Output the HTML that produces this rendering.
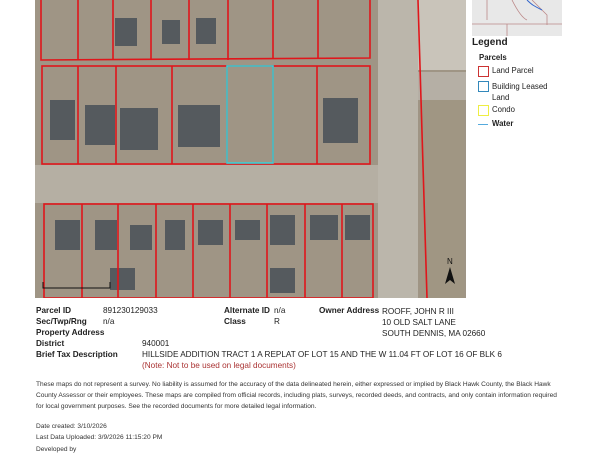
<!DOCTYPE html>
<html><head><style>
body{margin:0;width:600px;height:450px;background:#fff;font-family:"Liberation Sans",sans-serif;position:relative;overflow:hidden;color:#222}
.a{position:absolute;white-space:nowrap}
.b{font-weight:bold}
.t{font-size:8.2px}
.d{font-size:6.6px;line-height:11px;color:#333}
</style></head><body>
<svg class="a" style="left:35px;top:0" width="431" height="298" viewBox="35 0 431 298">
<rect x="35" y="0" width="431" height="298" fill="#9f9585"/>
<rect x="35" y="165" width="345" height="38" fill="#b5afa3"/>
<rect x="378" y="0" width="40" height="298" fill="#bbb6ab"/>
<rect x="418" y="0" width="48" height="70" fill="#c9c4ba"/>
<rect x="418" y="72" width="48" height="28" fill="#b5afa5"/>
<rect x="420" y="100" width="44" height="198" fill="#a09683"/>
<g fill="#555a5e">
<rect x="115" y="18" width="22" height="28"/><rect x="162" y="20" width="18" height="24"/><rect x="196" y="18" width="20" height="26"/>
<rect x="50" y="100" width="25" height="40"/><rect x="85" y="105" width="30" height="40"/><rect x="120" y="108" width="38" height="42"/><rect x="178" y="105" width="42" height="42"/>
<rect x="323" y="98" width="35" height="45"/>
<rect x="55" y="220" width="25" height="30"/><rect x="95" y="220" width="22" height="30"/><rect x="130" y="225" width="22" height="25"/><rect x="165" y="220" width="20" height="30"/><rect x="198" y="220" width="25" height="25"/><rect x="235" y="220" width="25" height="20"/><rect x="270" y="215" width="25" height="30"/><rect x="310" y="215" width="28" height="25"/><rect x="345" y="215" width="25" height="25"/><rect x="110" y="268" width="25" height="22"/><rect x="270" y="268" width="25" height="25"/>
</g>
<g fill="none" stroke="#e0161b" stroke-width="1.6">
<polyline points="41,0 41,60 370,58 370,0"/>
<path d="M78 0V60M113 0V60M151 0V60M189 0V60M228 0V60M273 0V58M318 0V58"/>
<rect x="42" y="66" width="328" height="98"/>
<path d="M78 66V164M116 66V164M172 66V164M227 66V164M273 66V164M317 66V164"/>
<rect x="44" y="204" width="329" height="94"/>
<path d="M82 204V298M118 204V298M156 204V298M193 204V298M230 204V298M267 204V298M305 204V298M342 204V298"/>
<path d="M418 0L427 298"/>
</g>
<rect x="227" y="66" width="46" height="97" fill="none" stroke="#3cd0d6" stroke-width="1.6"/>
<path d="M43 282V288H110V282" stroke="#111" fill="none"/>
<text x="447" y="264" font-size="8" fill="#111">N</text>
<path d="M450 267L445 284L450 280L455 284Z" fill="#111"/>
</svg>
<div class="a" style="left:472px;top:0;width:90px;height:36px;background:#e8e8e8"></div>
<svg class="a" style="left:472px;top:0" width="90" height="36"><path d="M15 0V20M40 0C45 10 50 18 55 20M60 0L75 15V25M0 24H90M35 24V36" stroke="#b88" fill="none" stroke-width=".8"/><path d="M55 0C60 5 62 6 70 10" stroke="#36c" fill="none"/></svg>
<div class="a b" style="left:472px;top:37px;font-size:10px">Legend</div>
<div class="a" style="left:479px;top:53px;font-size:7.8px;font-weight:bold">Parcels</div>
<div class="a" style="left:478px;top:66px;width:9px;height:9px;border:1.3px solid #c33"></div>
<div class="a" style="left:492px;top:66px;font-size:7.8px">Land Parcel</div>
<div class="a" style="left:478px;top:81px;width:9px;height:9px;border:1.3px solid #38b"></div>
<div class="a" style="left:492px;top:81px;font-size:7.8px;line-height:11px">Building Leased<br>Land</div>
<div class="a" style="left:478px;top:105px;width:9px;height:9px;border:1.3px solid #ee4"></div>
<div class="a" style="left:492px;top:105px;font-size:7.8px">Condo</div>
<div class="a" style="left:478px;top:124px;width:10px;height:1px;background:#5ad"></div>
<div class="a" style="left:492px;top:119px;font-size:7.8px;font-weight:bold">Water</div>

<div class="a t b" style="left:36px;top:306px">Parcel ID</div><div class="a t" style="left:103px;top:306px">891230129033</div>
<div class="a t b" style="left:36px;top:317px">Sec/Twp/Rng</div><div class="a t" style="left:103px;top:317px">n/a</div>
<div class="a t b" style="left:36px;top:328px">Property Address</div>
<div class="a t b" style="left:36px;top:339px">District</div><div class="a t" style="left:142px;top:339px">940001</div>
<div class="a t b" style="left:36px;top:350px">Brief Tax Description</div><div class="a t" style="left:142px;top:350px">HILLSIDE ADDITION TRACT 1 A REPLAT OF LOT 15 AND THE W 11.04 FT OF LOT 16 OF BLK 6</div>
<div class="a t" style="left:142px;top:361px;color:#a33">(Note: Not to be used on legal documents)</div>
<div class="a t b" style="left:224px;top:306px">Alternate ID</div><div class="a t" style="left:274px;top:306px">n/a</div>
<div class="a t b" style="left:224px;top:317px">Class</div><div class="a t" style="left:274px;top:317px">R</div>
<div class="a t b" style="left:319px;top:306px">Owner Address</div>
<div class="a t" style="left:382px;top:306px;line-height:11px">ROOFF, JOHN R III<br>10 OLD SALT LANE<br>SOUTH DENNIS, MA 02660</div>
<div class="a d" style="left:36px;top:379px;white-space:normal;width:530px">These maps do not represent a survey. No liability is assumed for the accuracy of the data delineated herein, either expressed or implied by Black Hawk County, the Black Hawk County Assessor or their employees. These maps are compiled from official records, including plats, surveys, recorded deeds, and contracts, and only contain information required for local government purposes. See the recorded documents for more detailed legal information.</div>
<div class="a d" style="left:36px;top:421px">Date created: 3/10/2026<br>Last Data Uploaded: 3/9/2026 11:15:20 PM</div>
<div class="a d" style="left:36px;top:444px">Developed by</div>
</body></html>
